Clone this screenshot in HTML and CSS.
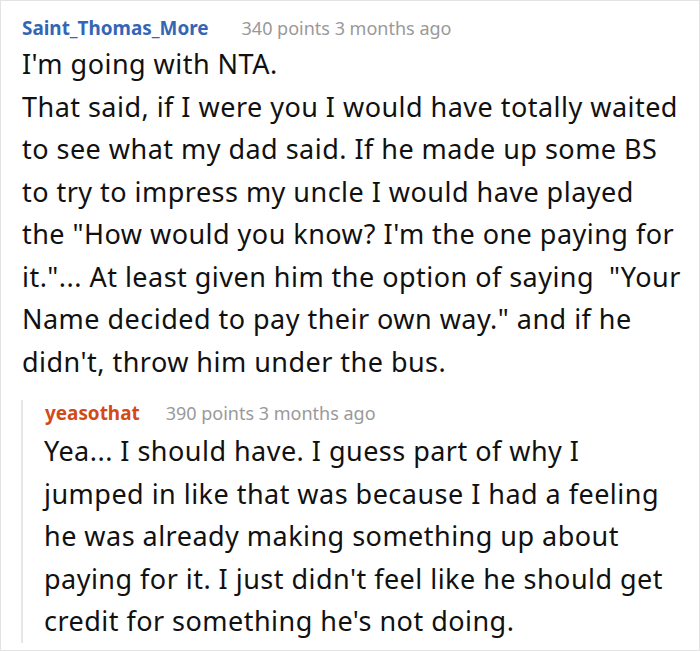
FILE: index.html
```html
<!DOCTYPE html>
<html>
<head>
<meta charset="utf-8">
<link rel="stylesheet" href="styles.css">
</head>
<body>
<div class="card">
  <div class="comment">
    <div class="meta"><span class="user user-blue">Saint_Thomas_More</span><span class="info">340 points 3 months ago</span></div>
    <div class="body">I'm going with NTA.<br>That said, if I were you I would have totally waited to see what my dad said. If he made up some BS to try to impress my uncle I would have played the "How would you know? I'm the one paying for it."... At least given him the option of saying &nbsp;"Your Name decided to pay their own way." and if he didn't, throw him under the bus.</div>
  </div>
  <div class="reply">
    <div class="meta"><span class="user user-orange">yeasothat</span><span class="info info-reply">390 points 3 months ago</span></div>
    <div class="body">Yea... I should have. I guess part of why I jumped in like that was because I had a feeling he was already making something up about paying for it. I just didn't feel like he should get credit for something he's not doing.</div>
  </div>
</div>
</body>
</html>
```
FILE: styles.css
```css
html, body {
  margin: 0;
  padding: 0;
  background: #fff;
}
.card {
  box-sizing: border-box;
  width: 700px;
  height: 651px;
  border: 1px solid #e3e3e3;
  padding: 14px 18px 0 20px;
  font-family: "Noto Sans", "Open Sans", sans-serif;
  color: #111;
}
.meta {
  display: flex;
  align-items: baseline;
  font-size: 18px;
  line-height: 26px;
  padding-left: 1px;
}
.user {
  font-weight: 700;
  font-size: 18.9px;
}
.user-blue { color: #3566b5; }
.user-orange { color: #d24a17; }
.info {
  color: #999;
  margin-left: 33px;
}
.info-reply {
  margin-left: 26px;
}
.comment .body {
  padding-left: 1px;
}
.body {
  font-size: 27px;
  letter-spacing: 0.47px;
  line-height: 42.5px;
  margin-top: 2px;
}
.reply {
  margin-top: 17px;
  border-left: 2px solid #e6e6e6;
  padding-left: 21px;
}
.reply .body {
  margin-top: 4px;
}
```
